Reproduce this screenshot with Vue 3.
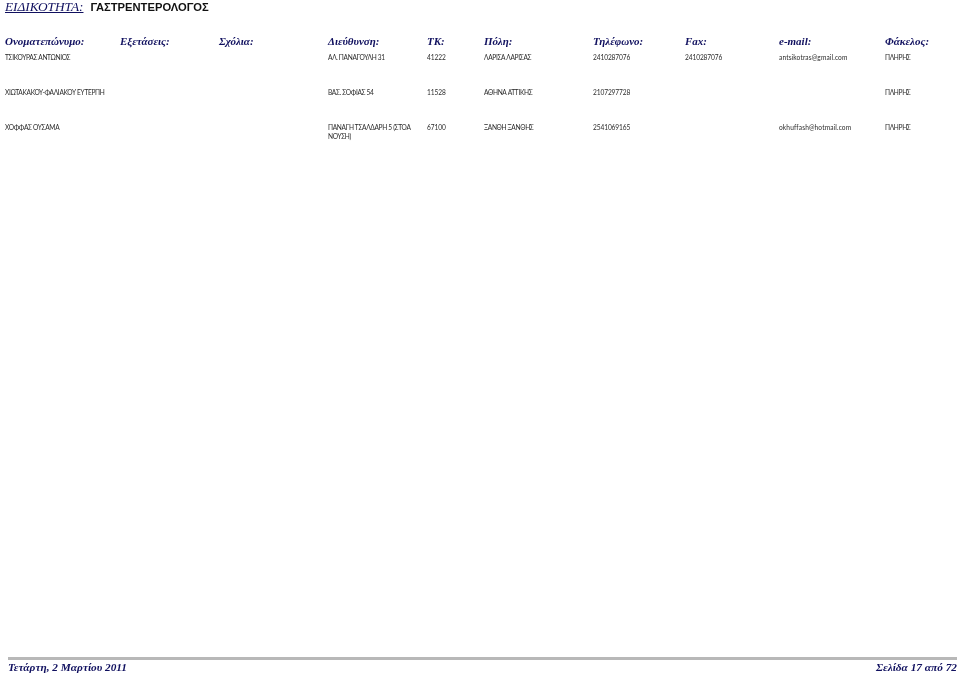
<script setup>
const columns = ['Ονοματεπώνυμο:', 'Εξετάσεις:', 'Σχόλια:', 'Διεύθυνση:', 'ΤΚ:', 'Πόλη:', 'Τηλέφωνο:', 'Fax:', 'e-mail:', 'Φάκελος:']
const rows = [
  { id: 1, cells: ['ΤΣΙΚΟΥΡΑΣ ΑΝΤΩΝΙΟΣ', '', '', 'ΑΛ. ΠΑΝΑΓΟΥΛΗ 31', '41222', 'ΛΑΡΙΣΑ ΛΑΡΙΣΑΣ', '2410287076', '2410287076', 'antsikotras@gmail.com', 'ΠΛΗΡΗΣ'] },
  { id: 2, cells: ['ΧΙΩΤΑΚΑΚΟΥ-ΦΑΛΙΑΚΟΥ ΕΥΤΕΡΠΗ', '', '', 'ΒΑΣ. ΣΟΦΙΑΣ 54', '11528', 'ΑΘΗΝΑ ΑΤΤΙΚΗΣ', '2107297728', '', '', 'ΠΛΗΡΗΣ'] },
  { id: 3, cells: ['ΧΟΦΦΑΣ ΟΥΣΑΜΑ', '', '', 'ΠΑΝΑΓΗ ΤΣΑΛΔΑΡΗ 5 (ΣΤΟΑ ΝΟΥΣΗ)', '67100', 'ΞΑΝΘΗ ΞΑΝΘΗΣ', '2541069165', '', 'okhuffash@hotmail.com', 'ΠΛΗΡΗΣ'] }
]
const kind = (i) => (i === 8 ? 'mail' : [4, 6, 7].includes(i) ? 'num' : 'caps')
</script>

<template>
  <div class="page">
    <header class="title">
      <span class="label">ΕΙΔΙΚΟΤΗΤΑ:</span>
      <span class="value">ΓΑΣΤΡΕΝΤΕΡΟΛΟΓΟΣ</span>
    </header>
    <section class="table">
      <div class="grid head">
        <div v-for="c in columns" :key="c">{{ c }}</div>
      </div>
      <div v-for="r in rows" :key="r.id" class="grid row">
        <div v-for="(c, i) in r.cells" :key="i" class="cell" :class="kind(i)">{{ c }}</div>
      </div>
    </section>
    <footer class="footer">
      <span>Τετάρτη, 2 Μαρτίου 2011</span>
      <span>Σελίδα 17 από 72</span>
    </footer>
  </div>
</template>

<style>
html, body { margin: 0; background: #fff; }
</style>

<style scoped>
.page {
  width: 960px;
  height: 677px;
  display: flex;
  flex-direction: column;
  box-sizing: border-box;
  overflow: hidden;
  background: #fff;
  filter: blur(0.3px);
}
.title {
  display: flex;
  align-items: baseline;
  gap: 7px;
  height: 14px;
  padding-left: 5px;
  line-height: 14px;
}
.label {
  font: italic 13.3px/14px "Liberation Serif", serif;
  color: #10105f;
  text-decoration: underline;
}
.value {
  font: bold 11.2px/14px "Liberation Sans", sans-serif;
  color: #111;
}
.table { margin-top: 20px; flex: 1; }
.grid {
  display: grid;
  grid-template-columns: 115px 99px 109px 99px 57px 109px 92px 94px 106px 70px;
  padding-left: 5px;
}
.head {
  height: 15px;
  align-items: center;
  font: italic bold 11px/15px "Liberation Serif", serif;
  color: #10105f;
  white-space: nowrap;
}
.row {
  font: 6.6px/8.5px Lato, sans-serif;
  color: #2a2a2a;
  height: 35px;
  padding-top: 4px;
  box-sizing: border-box;
}
.cell { padding-right: 12px; }
.cell:first-child { white-space: nowrap; }
.caps { letter-spacing: -0.33px; }
.num { letter-spacing: -0.1px; }
.mail { letter-spacing: 0.12px; }
.footer {
  margin: 0 3px 3px 8px;
  border-top: 3px solid #b8b8b8;
  display: flex;
  justify-content: space-between;
  font: italic bold 11.3px/13px "Liberation Serif", serif;
  color: #10105f;
  padding-top: 1px;
}
</style>
